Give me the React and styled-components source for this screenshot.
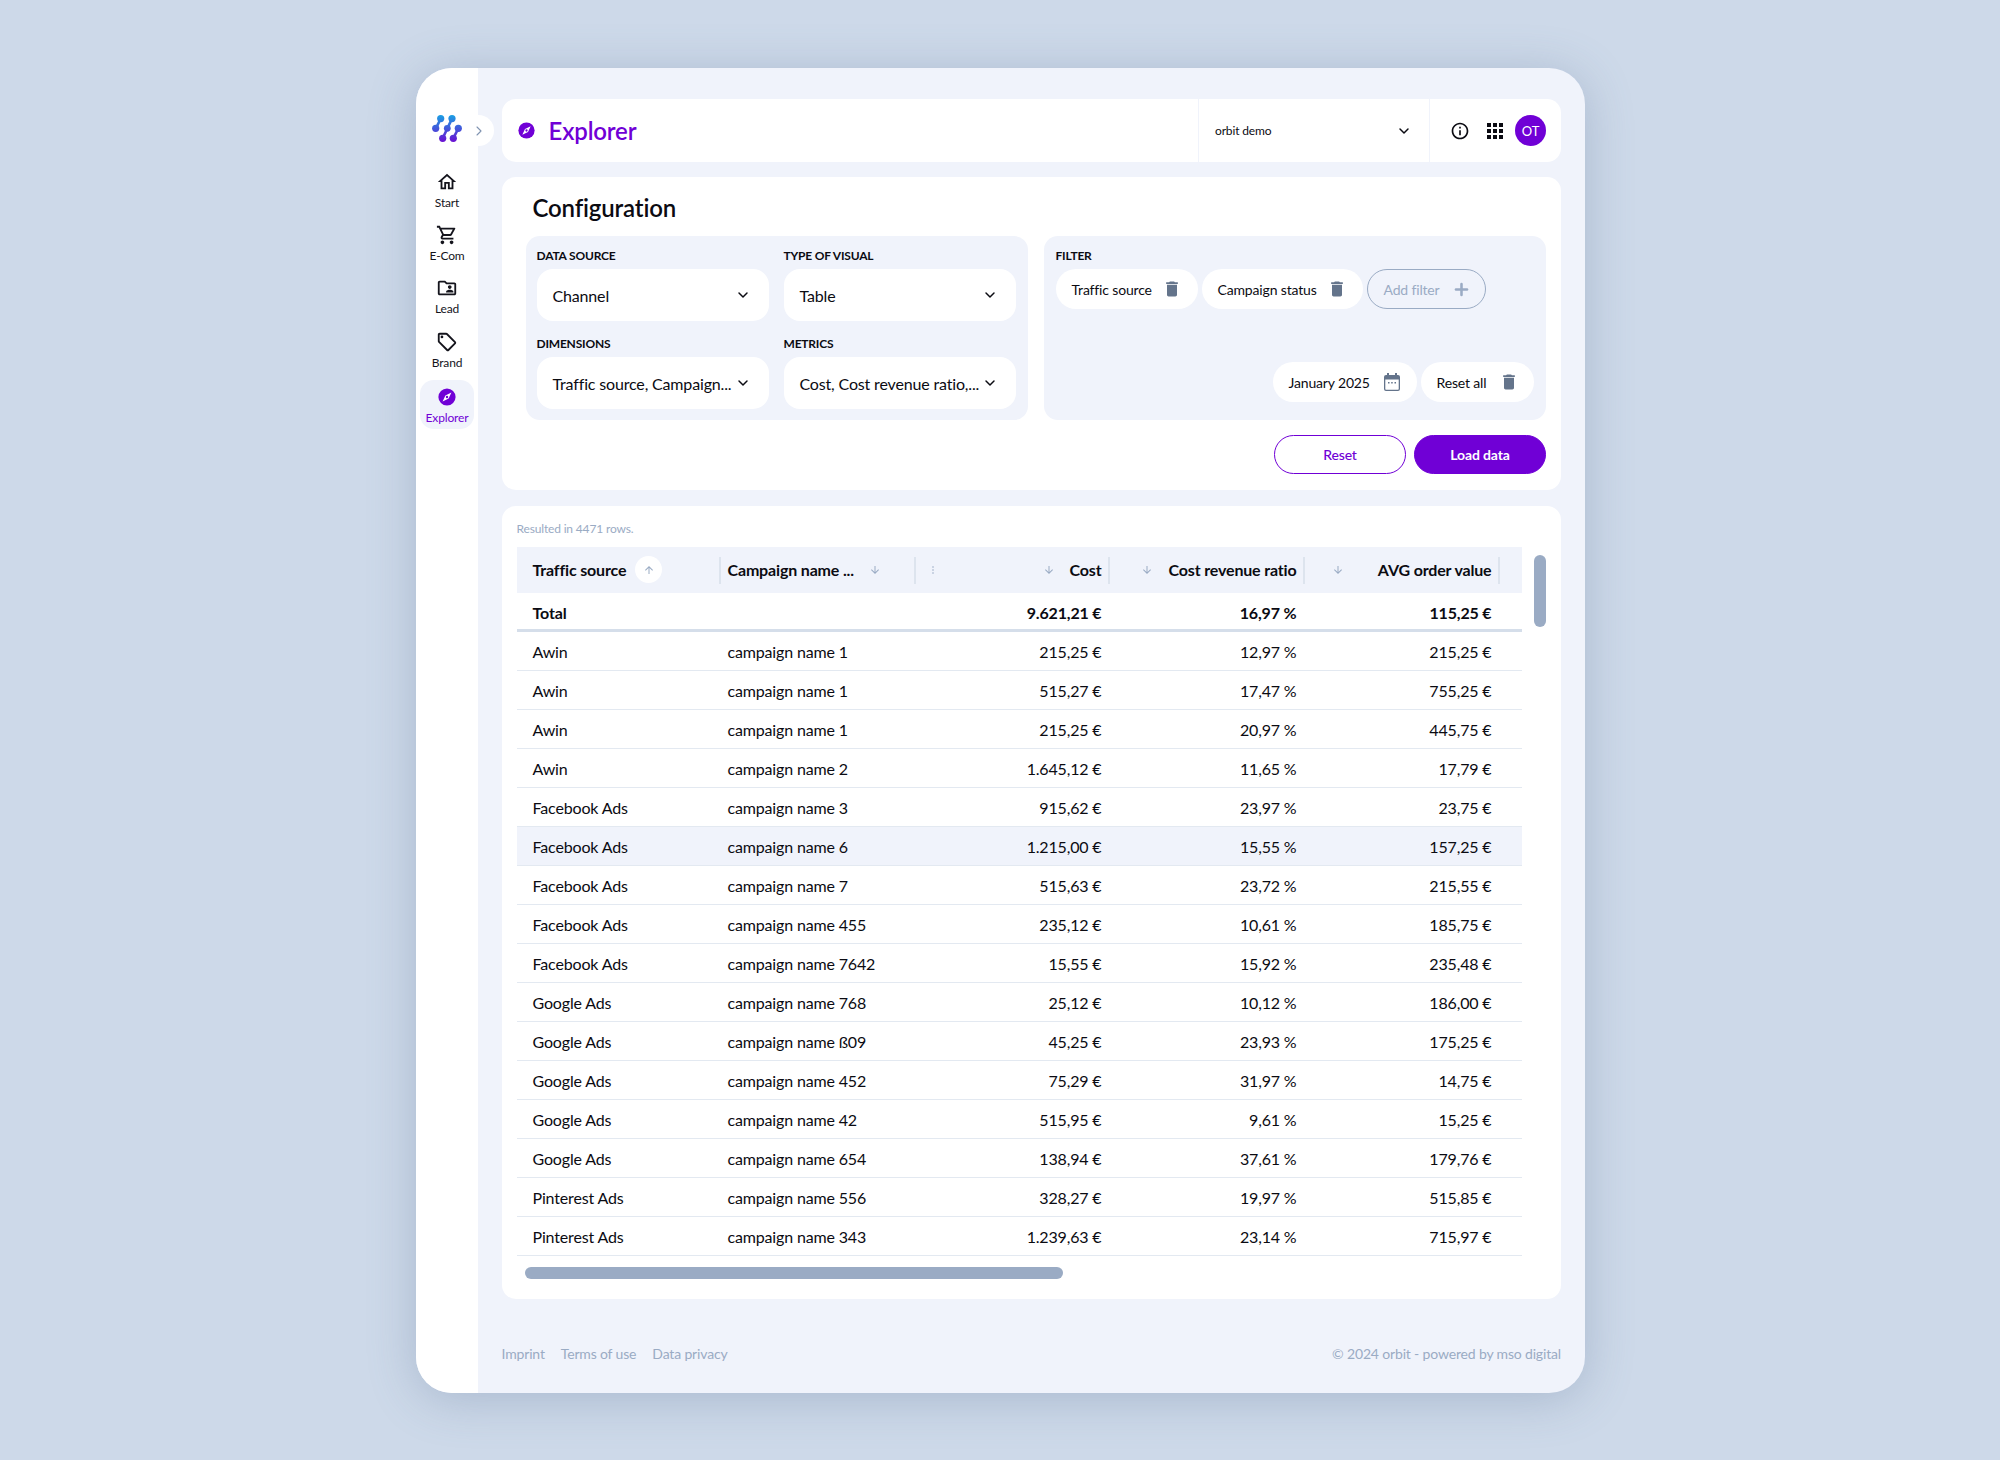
import React from 'react';
import styled, { createGlobalStyle } from 'styled-components';
import { MdOutlineHome, MdOutlineShoppingCart, MdOutlineFolderShared, MdOutlineSell, MdDelete, MdInfoOutline, MdApps, MdArrowUpward, MdArrowDownward } from 'react-icons/md';
import { ChevronDown, ChevronRight, Plus } from 'lucide-react';

const purple = '#7000d6';
const muted = '#9aabc4';
const pale = '#f0f3fb';

const Global = createGlobalStyle`
  html, body { margin: 0; padding: 0; background: #cdd9e9; }
  body { font-family: Lato, "Open Sans", sans-serif; color: #0b0b12; letter-spacing: -.01em; }
  * { box-sizing: border-box; }
`;

const Page = styled.div`
  width: 2000px; height: 1460px; padding-top: 68px; display: flex; justify-content: flex-start; padding-left: 416px;
`;
const Frame = styled.div`
  width: 1169px; height: 1325px; border-radius: 36px; background: ${pale}; display: flex;
  box-shadow: 0 6px 48px rgba(92, 114, 148, .32); position: relative;
`;
const Sidebar = styled.nav`
  width: 62.5px; background: #fff; border-radius: 36px 0 0 36px; padding: 47px 4px 0; display: flex; flex-direction: column; align-items: center; position: relative;
`;
const LogoWrap = styled.div`height: 27px; margin-bottom: 24px; display: flex;`;
const Collapse = styled.div`
  position: absolute; left: 62px; top: 47px; width: 16px; height: 31px; background: #fff; border-radius: 0 16px 16px 0;
  display: flex; align-items: center; color: #7f93b0;
  svg { margin-left: -7px; }
`;
const NavItem = styled.div`
  width: 54px; height: ${p => p.$h || 53}px; border-radius: 14px; display: flex; flex-direction: column; align-items: center; padding-top: ${p => p.$active ? 8 : 5}px;
  font-size: 12px; line-height: 16px; color: ${p => p.$active ? purple : '#14141c'};
  background: ${p => p.$active ? pale : 'transparent'};
  svg { display: block; margin-bottom: ${p => p.$active ? 4 : 2}px; }
`;
const Main = styled.main`
  flex: 1; padding: 31px 24px 0 23.5px; display: flex; flex-direction: column;
`;
const Topbar = styled.header`
  height: 63px; background: #fff; border-radius: 14px; display: flex; align-items: center; margin-bottom: 15px;
`;
const PageTitle = styled.h1`
  flex: 1; margin: 0; padding-left: 16px; display: flex; align-items: center; gap: 14px; font-size: 24px; line-height: 30px; font-weight: 600; color: ${purple};
`;
const Account = styled.div`
  width: 232px; height: 100%; padding: 0 17px 0 16px; border-left: 1px solid ${pale}; border-right: 1px solid ${pale};
  display: flex; align-items: center; justify-content: space-between; font-size: 12px;
`;
const TopIcons = styled.div`
  width: 131px; height: 100%; display: flex; align-items: center; padding-left: 20px; gap: 13px;
  svg { display: block; }
`;
const Avatar = styled.div`
  width: 31px; height: 31px; border-radius: 50%; background: ${purple}; color: #fff; display: flex; align-items: center; justify-content: center; font-size: 13px; margin-left: -5px;
`;
const Card = styled.section`
  background: #fff; border-radius: 14px; margin-bottom: 16px;
`;
const ConfigCard = styled(Card)`height: 313px; padding: 15px 15px 0 24px;`;
const ConfigTitle = styled.h2`
  margin: 0 0 12px 7px; font-size: 24px; line-height: 32px; font-weight: 600;
`;
const ConfigGrid = styled.div`
  display: grid; grid-template-columns: 502px 502px; gap: 16px; height: 183px;
`;
const Panel = styled.div`
  background: ${pale}; border-radius: 14px; padding: 12px 11px 11px;
`;
const FieldGrid = styled(Panel)`
  display: grid; grid-template-columns: 232px 232px; column-gap: 15px; row-gap: 15px; align-content: start;
`;
const Field = styled.div`display: flex; flex-direction: column;`;
const Label = styled.label`
  font-size: 12px; line-height: 16px; font-weight: 700; margin-bottom: 5px; display: block; letter-spacing: -.2px;
`;
const Select = styled.div`
  height: 52px; border-radius: 16px; background: #fff; padding: 0 18px 0 16px; display: flex; align-items: center; justify-content: space-between; font-size: 16px; white-space: nowrap;
  svg { flex: none; }
`;
const FilterPanel = styled(Panel)`
  display: flex; flex-direction: column; justify-content: space-between; padding: 12px 12px 18px 12px;
`;
const ChipRow = styled.div`display: flex; gap: 4px; justify-content: ${p => p.$end ? 'flex-end' : 'flex-start'};`;
const Chip = styled.div`
  height: 40px; border-radius: 20px; background: ${p => p.$ghost ? 'transparent' : '#fff'}; padding: 0 ${p => p.$pr || 16}px 0 16px;
  border: ${p => p.$ghost ? `1px solid ${muted}` : 'none'}; color: ${p => p.$ghost ? muted : 'inherit'};
  display: flex; align-items: center; font-size: 14px; width: ${p => p.$w}px; justify-content: space-between; white-space: nowrap;
  svg { color: ${p => p.$ghost ? muted : '#64748b'}; flex: none; }
`;
const Actions = styled.div`display: flex; justify-content: flex-end; gap: 8px; margin-top: 16px;`;
const Button = styled.button`
  width: 132px; height: 39px; border-radius: 20px; font: 500 14px Lato, sans-serif; cursor: pointer; letter-spacing: -.01em;
  border: 1.5px solid ${purple}; color: ${p => p.$primary ? '#fff' : purple}; background: ${p => p.$primary ? purple : '#fff'};
  font-weight: ${p => p.$primary ? 700 : 500};
`;
const TableCard = styled(Card)`
  height: 793px; padding: 14px 15px 0 15px; margin-bottom: 0;
`;
const ResultNote = styled.div`font-size: 12px; line-height: 18px; color: ${muted}; margin-bottom: 9px;`;
const TableArea = styled.div`display: flex; gap: 12.5px;`;
const Table = styled.div`width: 1005px; flex: none;`;
const Row = styled.div`
  display: grid; grid-template-columns: 204px 195px 194px 195px 195px 22px; align-items: center; font-size: 16px;
  height: ${p => p.$h || 39}px; background: ${p => p.$hl ? pale : 'transparent'};
  border-bottom: ${p => p.$heavy ? '3px solid #d5deea' : '1px solid #e3e9f1'};
  padding-top: ${p => p.$heavy ? 2 : 0}px;
  font-weight: ${p => p.$bold ? 700 : 400};
`;
const HeadRow = styled(Row)`height: 46px; background: ${pale}; border: none; font-weight: 700;`;
const Cell = styled.div`
  padding: ${p => p.$first ? '0 0 0 16px' : p => p.$num ? '0 8px 0 0' : '0 0 0 7px'}; text-align: ${p => p.$num ? 'right' : 'left'}; white-space: nowrap;
`;
const HeadCell = styled.div`
  height: 27px; border-right: 2px solid #dde4ee; display: flex; align-items: center; white-space: nowrap;
  justify-content: ${p => p.$num ? 'flex-end' : 'flex-start'}; gap: ${p => p.$gap || 0}px;
  padding: ${p => p.$first ? '0 0 1px 16px' : p => p.$num ? '0 6px 1px 16px' : '0 0 1px 7px'};
`;
const SortBadge = styled.span`
  width: 27px; height: 27px; border-radius: 50%; background: #fff; color: ${muted}; display: inline-flex; align-items: center; justify-content: center; margin-left: 9px;
`;
const SortIcon = styled.span`color: ${muted}; display: inline-flex; margin-left: ${p => p.$ml || 0}px;`;
const Grow = styled.span`flex: 1;`;
const VScroll = styled.div`width: 12px; height: 72px; margin-top: 8px; border-radius: 6px; background: ${muted}; flex: none;`;
const HScroll = styled.div`width: 538px; height: 12px; margin: 11px 0 0 8px; border-radius: 6px; background: ${muted};`;
const Footer = styled.footer`
  margin-top: 46px; display: flex; justify-content: space-between; font-size: 14px; line-height: 18px; color: ${muted};
`;
const FooterLinks = styled.div`display: flex; gap: 16px;`;

const Compass = ({ size = 18 }) => (
  <svg width={size} height={size} viewBox="0 0 18 18">
    <circle cx="9" cy="9" r="8.6" fill={purple} />
    <path d="M13.4 4.6 L10.6 10.6 L4.6 13.4 L7.4 7.4 Z" fill="#fff" />
    <circle cx="9" cy="9" r="1.2" fill={purple} />
  </svg>
);

const Logo = () => (
  <svg width="30" height="27" viewBox="0 0 30 27">
    <defs>
      <linearGradient id="lg" gradientUnits="userSpaceOnUse" x1="0" y1="0" x2="0" y2="27">
        <stop offset="0" stopColor="#1a9fe3" />
        <stop offset="1" stopColor="#6b10d2" />
      </linearGradient>
    </defs>
    <g stroke="url(#lg)" strokeWidth="2.6" strokeLinecap="round" fill="none">
      <path d="M8.7 3.6 3.9 13.3" />
      <path d="M20 3.6 10.7 23.3" />
      <path d="M26.3 13.3 21.3 23.3" />
    </g>
    <g fill="url(#lg)">
      <circle cx="8.7" cy="3.6" r="3.6" /><circle cx="20" cy="3.6" r="3.6" />
      <circle cx="26.3" cy="13.3" r="3.6" /><circle cx="3.7" cy="13.3" r="3.6" />
      <circle cx="15.3" cy="13.3" r="3.4" />
      <circle cx="10.7" cy="23.3" r="3.6" /><circle cx="21.3" cy="23.3" r="3.6" />
    </g>
  </svg>
);

const Calendar = () => (
  <svg width="16" height="18" viewBox="0 0 16 18" fill="#64748b">
    <rect x="3" y="0" width="2" height="3" /><rect x="11" y="0" width="2" height="3" />
    <path fillRule="evenodd" d="M2 2h12a2 2 0 0 1 2 2v12a2 2 0 0 1-2 2H2a2 2 0 0 1-2-2V4a2 2 0 0 1 2-2Zm-.7 4.5V16c0 .4.3.7.7.7h12c.4 0 .7-.3.7-.7V6.500Z" />
    <rect x="4" y="9" width="1.500" height="1.500" /><rect x="7.200" y="9" width="1.500" height="1.500" /><rect x="10.500" y="9" width="1.500" height="1.500" />
  </svg>
);

const Dots = () => (
  <svg width="2" height="8" viewBox="0 0 2 8" fill={muted}>
    <circle cx="1" cy="1" r=".8" /><circle cx="1" cy="4" r=".8" /><circle cx="1" cy="7" r=".8" />
  </svg>
);

const Down = () => <SortIcon><MdArrowDownward size={12} /></SortIcon>;

const rows = [
  ['Awin', 'campaign name 1', '215,25 €', '12,97 %', '215,25 €'],
  ['Awin', 'campaign name 1', '515,27 €', '17,47 %', '755,25 €'],
  ['Awin', 'campaign name 1', '215,25 €', '20,97 %', '445,75 €'],
  ['Awin', 'campaign name 2', '1.645,12 €', '11,65 %', '17,79 €'],
  ['Facebook Ads', 'campaign name 3', '915,62 €', '23,97 %', '23,75 €'],
  ['Facebook Ads', 'campaign name 6', '1.215,00 €', '15,55 %', '157,25 €'],
  ['Facebook Ads', 'campaign name 7', '515,63 €', '23,72 %', '215,55 €'],
  ['Facebook Ads', 'campaign name 455', '235,12 €', '10,61 %', '185,75 €'],
  ['Facebook Ads', 'campaign name 7642', '15,55 €', '15,92 %', '235,48 €'],
  ['Google Ads', 'campaign name 768', '25,12 €', '10,12 %', '186,00 €'],
  ['Google Ads', 'campaign name ß09', '45,25 €', '23,93 %', '175,25 €'],
  ['Google Ads', 'campaign name 452', '75,29 €', '31,97 %', '14,75 €'],
  ['Google Ads', 'campaign name 42', '515,95 €', '9,61 %', '15,25 €'],
  ['Google Ads', 'campaign name 654', '138,94 €', '37,61 %', '179,76 €'],
  ['Pinterest Ads', 'campaign name 556', '328,27 €', '19,97 %', '515,85 €'],
  ['Pinterest Ads', 'campaign name 343', '1.239,63 €', '23,14 %', '715,97 €'],
];

const nav = [
  { label: 'Start', icon: <MdOutlineHome size={22} />, h: 53 },
  { label: 'E-Com', icon: <MdOutlineShoppingCart size={22} />, h: 53 },
  { label: 'Lead', icon: <MdOutlineFolderShared size={22} />, h: 54 },
  { label: 'Brand', icon: <MdOutlineSell size={22} />, h: 54 },
];

export default function App() {
  return (
    <Page>
      <Global />
      <Frame>
        <Sidebar>
          <LogoWrap><Logo /></LogoWrap>
          <Collapse><ChevronRight size={16} strokeWidth={1.6} /></Collapse>
          {nav.map(n => (
            <NavItem key={n.label} $h={n.h}>{n.icon}{n.label}</NavItem>
          ))}
          <NavItem $active $h={49}><Compass size={18} />Explorer</NavItem>
        </Sidebar>
        <Main>
          <Topbar>
            <PageTitle><Compass size={17} />Explorer</PageTitle>
            <Account>orbit demo<ChevronDown size={16} strokeWidth={2.2} /></Account>
            <TopIcons>
              <MdInfoOutline size={20} />
              <MdApps size={24} />
              <Avatar>OT</Avatar>
            </TopIcons>
          </Topbar>
          <ConfigCard>
            <ConfigTitle>Configuration</ConfigTitle>
            <ConfigGrid>
              <FieldGrid>
                <Field><Label>DATA SOURCE</Label><Select>Channel<ChevronDown size={16} strokeWidth={2.2} /></Select></Field>
                <Field><Label>TYPE OF VISUAL</Label><Select>Table<ChevronDown size={16} strokeWidth={2.2} /></Select></Field>
                <Field><Label>DIMENSIONS</Label><Select>Traffic source, Campaign...<ChevronDown size={16} strokeWidth={2.2} /></Select></Field>
                <Field><Label>METRICS</Label><Select>Cost, Cost revenue ratio,...<ChevronDown size={16} strokeWidth={2.2} /></Select></Field>
              </FieldGrid>
              <FilterPanel>
                <div>
                  <Label>FILTER</Label>
                  <ChipRow>
                    <Chip $w={142}>Traffic source<MdDelete size={20} /></Chip>
                    <Chip $w={161}>Campaign status<MdDelete size={20} /></Chip>
                    <Chip $ghost $w={119} $pr={14}>Add filter<Plus size={19} strokeWidth={3.2} /></Chip>
                  </ChipRow>
                </div>
                <ChipRow $end>
                  <Chip $w={144} $pr={17}>January 2025<Calendar /></Chip>
                  <Chip $w={113} $pr={15}>Reset all<MdDelete size={20} /></Chip>
                </ChipRow>
              </FilterPanel>
            </ConfigGrid>
            <Actions>
              <Button>Reset</Button>
              <Button $primary>Load data</Button>
            </Actions>
          </ConfigCard>
          <TableCard>
            <ResultNote>Resulted in 4471 rows.</ResultNote>
            <TableArea>
              <Table>
                <HeadRow>
                  <HeadCell $first>Traffic source<SortBadge><MdArrowUpward size={12} /></SortBadge></HeadCell>
                  <HeadCell>Campaign name ...<SortIcon $ml={15}><MdArrowDownward size={12} /></SortIcon></HeadCell>
                  <HeadCell $num $gap={15}><Dots /><Grow /><Down />Cost</HeadCell>
                  <HeadCell $num $gap={16}><Down />Cost revenue ratio</HeadCell>
                  <HeadCell $num $gap={34}><Down />AVG order value</HeadCell>
                  <span />
                </HeadRow>
                <Row $bold $heavy $h={39}>
                  <Cell $first>Total</Cell><Cell />
                  <Cell $num>9.621,21 €</Cell><Cell $num>16,97 %</Cell><Cell $num>115,25 €</Cell>
                </Row>
                {rows.map((r, i) => (
                  <Row key={i} $hl={i === 5}>
                    <Cell $first>{r[0]}</Cell><Cell>{r[1]}</Cell>
                    <Cell $num>{r[2]}</Cell><Cell $num>{r[3]}</Cell><Cell $num>{r[4]}</Cell>
                  </Row>
                ))}
              </Table>
              <VScroll />
            </TableArea>
            <HScroll />
          </TableCard>
          <Footer>
            <FooterLinks><span>Imprint</span><span>Terms of use</span><span>Data privacy</span></FooterLinks>
            <span>© 2024 orbit - powered by mso digital</span>
          </Footer>
        </Main>
      </Frame>
    </Page>
  );
}
